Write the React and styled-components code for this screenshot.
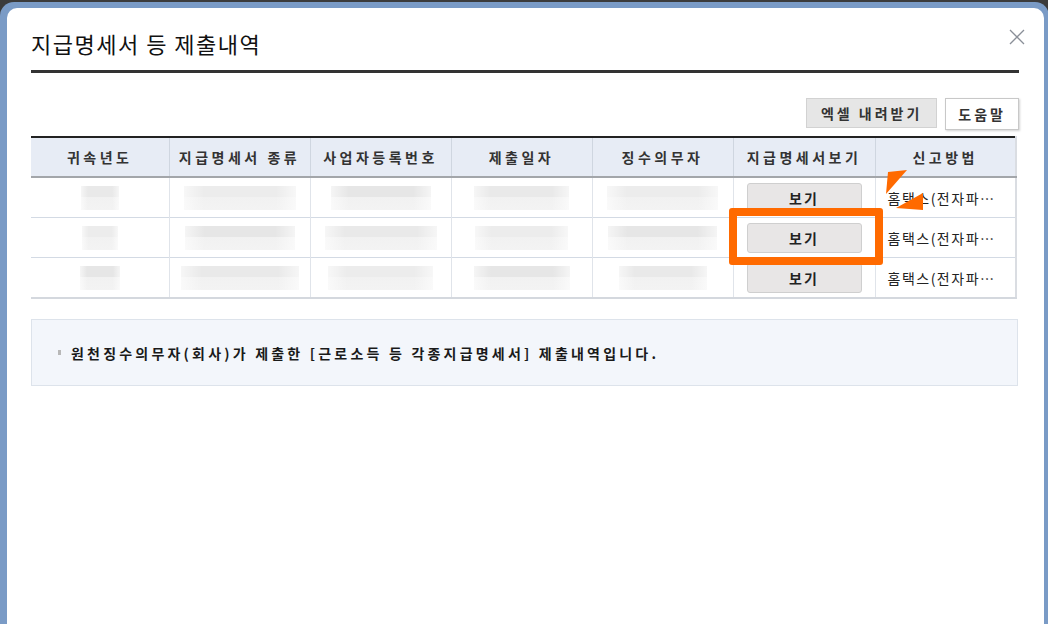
import React from 'react';
import styled, { createGlobalStyle } from 'styled-components';

// STYLES
const Global = createGlobalStyle`
    html, body {
        margin: 0;
        padding: 0;
        background: #3b3b3b;
        overflow: hidden;
    }
    body {
        font-family: "Noto Sans CJK KR", "Noto Sans", sans-serif;
        color: #222;
    }
`

const Page = styled.div`
    height: 100vh;
    padding-top: 2px;
    box-sizing: border-box;
    display: flex;
`

const Frame = styled.div`
    flex: 1;
    background: #7a9bc6;
    border-radius: 14px 14px 0 0;
    padding: 6px 5px 0 7px;
    display: flex;
`

const Panel = styled.div`
    flex: 1;
    background: #fff;
    border-radius: 10px 10px 0 0;
    padding: 0 25px 0 24px;
    display: flex;
    flex-direction: column;
`

const Header = styled.div`
    display: flex;
    justify-content: space-between;
    align-items: center;
    padding: 20px 0 12px;
    border-bottom: 3px solid #333;
`

const Title = styled.h1`
    margin: 0;
    font-size: 22px;
    line-height: 30px;
    font-weight: 400;
    letter-spacing: 1.5px;
    color: #111;
`

const Close = styled.button`
    width: 18px;
    height: 18px;
    margin-right: -7px;
    margin-top: -12px;
    padding: 0;
    border: none;
    background: none;
    display: flex;
`

const Toolbar = styled.div`
    display: flex;
    justify-content: flex-end;
    align-items: flex-start;
    gap: 8px;
    margin: 25px 0 6px;
    height: 32px;
`

const ToolButton = styled.button`
    height: ${p => (p.$light ? '32px' : '30px')};
    padding: 0 ${p => (p.$light ? '12px' : '14px')};
    border: 1px solid ${p => (p.$light ? '#c8c8c8' : '#d2d2d2')};
    background: ${p => (p.$light ? '#fff' : '#e6e6e6')};
    box-shadow: ${p => (p.$light ? '1px 1px 2px rgba(0,0,0,0.18)' : 'none')};
    font-family: inherit;
    font-size: 14px;
    font-weight: 600;
    letter-spacing: 3px;
    color: #333;
`

const TableWrap = styled.div`
    position: relative;
    margin-right: 2px;
`

const Table = styled.table`
    width: 100%;
    border-collapse: collapse;
    table-layout: fixed;
    border-top: 2px solid #222;
    border-bottom: 2px solid #d4d8de;
    border-right: 2px solid #dadde2;
`

const Th = styled.th`
    height: 38px;
    padding: 0;
    background: #e7ecf5;
    border-bottom: 2px solid #a3a6aa;
    border-left: ${p => (p.$first ? 'none' : '1px solid #cfd6e0')};
    font-size: 14px;
    font-weight: 600;
    letter-spacing: 3.5px;
    color: #333;
    text-align: center;
`

const Td = styled.td`
    height: 39px;
    padding: 0;
    border-top: 1px solid #d3dae4;
    border-left: ${p => (p.$first ? 'none' : '1px solid #e0e4ea')};
    text-align: ${p => (p.$left ? 'left' : 'center')};
    padding-left: ${p => (p.$left ? '12px' : '0')};
    font-size: 14px;
    letter-spacing: ${p => (p.$left ? '1.5px' : '0')};
    color: #222;
    white-space: nowrap;
    overflow: hidden;
`

const Blur = styled.div`
    display: inline-block;
    vertical-align: middle;
    width: ${p => p.$w}px;
    height: 24px;
    background:
        linear-gradient(90deg, rgba(255,255,255,0.6) 0%, rgba(255,255,255,0) 18%, rgba(255,255,255,0) 82%, rgba(255,255,255,0.6) 100%),
        linear-gradient(180deg, ${p => p.$tone} 0%, ${p => p.$tone} 45%, #f1f1f1 45%, #f3f3f3 100%);
`

const ViewButton = styled.button`
    width: 115px;
    height: 30px;
    border: 1px solid #cfcfcf;
    border-radius: 3px;
    background: #e8e6e6;
    font-family: inherit;
    font-size: 14px;
    font-weight: 600;
    letter-spacing: 2px;
    color: #222;
`

const Highlight = styled.div`
    position: absolute;
    left: 698px;
    top: 72px;
    width: 154px;
    height: 57px;
    box-sizing: border-box;
    border: 8px solid #ff6a00;
    border-radius: 3px;
    pointer-events: none;
`

const Arrow = styled.svg`
    position: absolute;
    left: 849px;
    top: 29px;
    width: 50px;
    height: 50px;
    pointer-events: none;
`

const Notice = styled.div`
    margin: 20px 1px 0 0;
    height: 67px;
    box-sizing: border-box;
    background: #f3f6fb;
    border: 1px solid #dde3eb;
    display: flex;
    align-items: center;
    padding-left: 26px;
    font-size: 14px;
    font-weight: 600;
    letter-spacing: 3.2px;
    color: #1a1a1a;

    &::before {
        content: '';
        width: 3px;
        height: 5px;
        background: #b8b8b8;
        margin-right: 10px;
    }
`

const columns = [
    { label: '귀속년도', w: 138 },
    { label: '지급명세서 종류', w: 141 },
    { label: '사업자등록번호', w: 141 },
    { label: '제출일자', w: 141 },
    { label: '징수의무자', w: 141 },
    { label: '지급명세서보기', w: 142 },
    { label: '신고방법', w: 141 },
];

const rows = [
    [38, 112, 100, 95, 111],
    [36, 110, 112, 93, 109],
    [40, 118, 105, 96, 88],
];

const tones = ['#e9e9e9', '#ececec', '#e6e6e6'];

function App() {
    return (
        <Page>
            <Global />
            <Frame>
                <Panel>
                    <Header>
                        <Title>지급명세서 등 제출내역</Title>
                        <Close aria-label="닫기">
                            <svg width="18" height="18" viewBox="0 0 18 18">
                                <path d="M2 2 L16 16 M16 2 L2 16" stroke="#8a8f98" strokeWidth="1.3" fill="none" />
                            </svg>
                        </Close>
                    </Header>

                    <Toolbar>
                        <ToolButton>엑셀 내려받기</ToolButton>
                        <ToolButton $light>도움말</ToolButton>
                    </Toolbar>

                    <TableWrap>
                        <Table>
                            <colgroup>
                                {columns.map(c => <col key={c.label} style={{ width: c.w }} />)}
                            </colgroup>
                            <thead>
                                <tr>
                                    {columns.map((c, i) => (
                                        <Th key={c.label} $first={i === 0}>{c.label}</Th>
                                    ))}
                                </tr>
                            </thead>
                            <tbody>
                                {rows.map((r, ri) => (
                                    <tr key={ri}>
                                        {r.map((w, ci) => (
                                            <Td key={ci} $first={ci === 0}>
                                                <Blur $w={w} $tone={tones[(ri + ci) % 3]} />
                                            </Td>
                                        ))}
                                        <Td><ViewButton>보기</ViewButton></Td>
                                        <Td $left>홈택스(전자파…</Td>
                                    </tr>
                                ))}
                            </tbody>
                        </Table>

                        <Highlight />
                        <Arrow viewBox="0 0 50 50">
                            <polygon points="8,7 27,5 6,29" fill="#ff6a00" />
                            <polygon points="16,43 43,28 43,45" fill="#ff6a00" />
                        </Arrow>
                    </TableWrap>

                    <Notice>원천징수의무자(회사)가 제출한 [근로소득 등 각종지급명세서] 제출내역입니다.</Notice>
                </Panel>
            </Frame>
        </Page>
    );
}

export default App;
